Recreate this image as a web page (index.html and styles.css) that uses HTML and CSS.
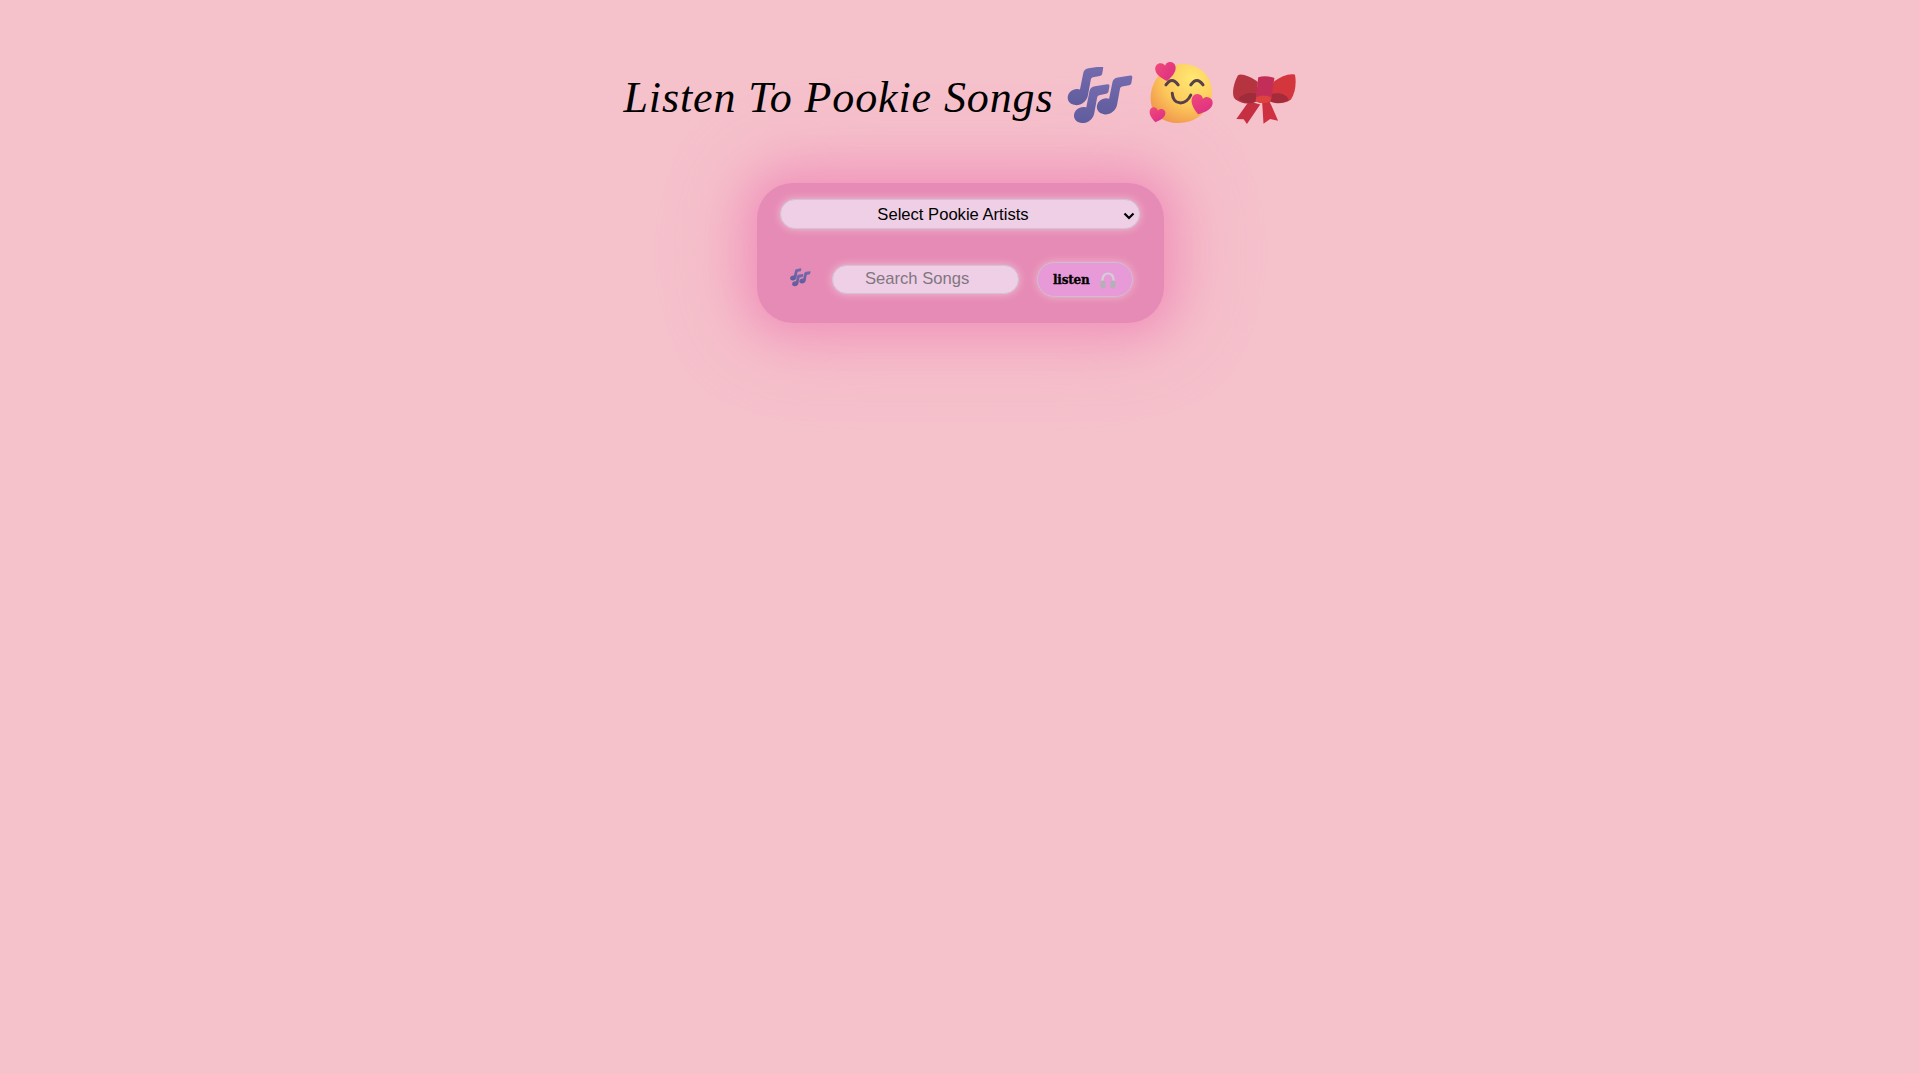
FILE: index.html
```html
<!DOCTYPE html>
<html lang="en">
<head>
<meta charset="utf-8">
<title>Listen To Pookie Songs</title>
<link rel="stylesheet" href="styles.css">
</head>
<body>
<svg class="defs" width="0" height="0" aria-hidden="true">
  <defs>
    <linearGradient id="noteGrad" x1="0" y1="0" x2="0" y2="1">
      <stop offset="0" stop-color="#756bae"/>
      <stop offset="1" stop-color="#5f5c9e"/>
    </linearGradient>
    <radialGradient id="faceGrad" cx="0.68" cy="0.25" r="0.85">
      <stop offset="0" stop-color="#ffe873"/>
      <stop offset="0.55" stop-color="#fdc95a"/>
      <stop offset="0.95" stop-color="#f19a4e"/>
    </radialGradient>
    <linearGradient id="heartGrad" x1="0" y1="0" x2="1" y2="1">
      <stop offset="0" stop-color="#f24a78"/>
      <stop offset="1" stop-color="#d92a86"/>
    </linearGradient>
    <g id="noteShape">
      <path d="M-26 3C-26 -14 -9 -26 7 -23Q9 -23 11 -22L21 -72Q24 -84 37 -86L75 -92Q82 -93 81 -86L78 -69Q77 -64 71 -63L50 -59Q45 -58 44 -53L35 -4C31 15 14 26 -2 25C-16 24 -26 15 -26 3Z"/>
    </g>
    <g id="notes" fill="url(#noteGrad)">
      <use href="#noteShape" x="108" y="138"/>
      <use href="#noteShape" x="127" y="192"/>
      <use href="#noteShape" x="196" y="166"/>
    </g>
    <path id="heart" d="M0 28C-14 18 -30 6 -30 -10C-30 -22 -20 -28 -11 -26C-6 -25 -2 -22 0 -17C2 -22 6 -25 11 -26C20 -28 30 -22 30 -10C30 6 14 18 0 28Z" fill="url(#heartGrad)"/>
  </defs>
</svg>

<header class="hero">
  <h1 class="title">Listen To Pookie Songs</h1>
  <svg class="emoji emoji-notes" viewBox="81 48 200 172"><use href="#notes"/></svg>
  <svg class="emoji emoji-face" viewBox="321 33 200 190">
    <path d="M425 42C475 40 515 75 516 125C517 175 475 220 415 220C365 220 330 190 331 145C332 90 372 44 425 42Z" fill="url(#faceGrad)"/>
    <g class="face-lines">
      <path d="M377 105Q395 78 414 105"/>
      <path d="M452 105Q470 78 489 105"/>
      <path d="M396 130C398 168 436 168 452 136"/>
    </g>
    <use href="#heart" transform="translate(377 65) rotate(-8) scale(1.03)"/>
    <use href="#heart" transform="translate(483 165) rotate(18) scale(1.08)"/>
    <use href="#heart" transform="translate(350 196) rotate(12) scale(0.8)"/>
  </svg>
  <svg class="emoji emoji-bow" viewBox="575 62 200 160">
    <path d="M628 150L590 204L612 205L622 219L662 160Z" fill="#c62f42"/>
    <path d="M668 155L672 218L692 204L716 209L690 150Z" fill="#cf3040"/>
    <path d="M655 92C630 75 605 65 595 72C582 95 576 125 583 140C600 160 635 162 650 150Z" fill="#b5343f"/>
    <path d="M596 143C610 125 635 122 652 128L650 150C635 160 612 156 596 143Z" fill="#a02b3b"/>
    <path d="M702 92C725 75 750 65 767 70C772 95 768 125 755 145C735 160 705 158 690 150Z" fill="#d4363d"/>
    <path d="M748 148C745 130 720 122 698 128L692 150C710 158 732 157 748 148Z" fill="#a42b3a"/>
    <path d="M656 78C670 73 690 74 705 80L694 150Q672 162 648 150Z" fill="#c22e58"/>
    <path d="M650 138Q672 128 696 138L693 150Q672 162 648 150Z" fill="#dd423f"/>
  </svg>
</header>

<main class="panel">
  <select class="artists">
    <option>Select Pookie Artists</option>
  </select>
  <form class="search">
    <svg class="search-icon" viewBox="81 48 200 172"><use href="#notes"/></svg>
    <input class="search-input" type="text" placeholder="Search Songs">
    <button class="listen" type="button">
      <span class="listen-label">listen</span>
      <svg class="phones" viewBox="0 0 16 18">
        <path d="M2.5 11V8a5.5 5.5 0 0 1 11 0v3" fill="none" stroke="#d2d0d4" stroke-width="2.2"/>
        <rect x="0.5" y="9.5" width="5" height="8" rx="2.2" fill="#b4b1b6"/>
        <rect x="10.5" y="9.5" width="5" height="8" rx="2.2" fill="#b4b1b6"/>
      </svg>
    </button>
  </form>
</main>
</body>
</html>
```
FILE: styles.css
```css
* {
  box-sizing: border-box;
}

body {
  margin: 0;
  padding-left: 2px;
  min-height: 1074px;
  background: #f5c2cb;
  overflow: hidden;
}

.defs {
  position: absolute;
}

.hero {
  display: flex;
  justify-content: center;
  align-items: center;
  gap: 13px;
  height: 183px;
  padding-bottom: 29px;
  padding-top: 30px;
}

.title {
  margin: 10px 0 0;
  font-family: "Liberation Serif", serif;
  font-style: italic;
  font-weight: 400;
  font-size: 44px;
  letter-spacing: 0.9px;
  color: #000;
  white-space: nowrap;
}

.emoji {
  display: block;
  flex: none;
}

.emoji-notes {
  width: 67px;
  height: 57px;
  margin-top: 7px;
}

.emoji-face {
  width: 67px;
  height: 63px;
}

.emoji-bow {
  width: 67px;
  height: 53px;
  margin: 12px 0 0 4px;
}

.face-lines path {
  fill: none;
  stroke: #57404a;
  stroke-width: 9;
  stroke-linecap: round;
}

.panel {
  width: 407px;
  height: 140px;
  margin: 0 auto;
  padding: 16px 24px 26px 23px;
  border-radius: 36px;
  background: #e68bb5;
  box-shadow: 0 0 36px 8px #f096bb, 0 0 70px 22px #f3a9c3, 0 0 110px 36px #f5bdcb;
}

.artists {
  display: block;
  width: 360px;
  height: 30px;
  padding: 0 14px 0 0;
  appearance: none;
  border: 1px solid #cfc4d0;
  border-radius: 15px;
  background-color: #eecfe6;
  background-image: url("data:image/svg+xml,%3Csvg xmlns='http://www.w3.org/2000/svg' viewBox='0 0 12 8'%3E%3Cpath d='M1.5 1.5L6 6l4.5-4.5' fill='none' stroke='%23000' stroke-width='2.2'/%3E%3C/svg%3E");
  background-repeat: no-repeat;
  background-position: right 4px top 12px;
  background-size: 12px 8px;
  box-shadow: 0 0 8px rgba(255, 255, 255, 0.45);
  font-family: "Liberation Sans", sans-serif;
  font-size: 16.6px;
  color: #000;
  text-align: center;
}

.search {
  display: flex;
  align-items: center;
  height: 35px;
  margin: 33px 0 0;
  padding-left: 10px;
}

.search-icon {
  flex: none;
  width: 21px;
  height: 19px;
  margin: -4px 21px 0 0;
}

.search-input {
  flex: none;
  width: 187px;
  height: 29px;
  margin-right: 18px;
  padding: 0 10px 2px 32px;
  border: 1px solid #cfc4d0;
  border-radius: 15px;
  background: #eecfe6;
  box-shadow: 0 0 8px rgba(255, 255, 255, 0.45);
  font-family: "Liberation Sans", sans-serif;
  font-size: 16.6px;
  color: #000;
}

.search-input::placeholder {
  color: #80767f;
  opacity: 1;
}

.listen {
  flex: none;
  display: flex;
  align-items: center;
  justify-content: space-between;
  width: 96px;
  height: 35px;
  padding: 0 16px 0 15px;
  border: 1px solid #cdbfce;
  border-radius: 18px;
  background: #e899d8;
  box-shadow: 0 0 8px rgba(255, 255, 255, 0.4);
}

.listen-label {
  font-family: "DejaVu Serif", serif;
  font-weight: 700;
  font-size: 12px;
  letter-spacing: -0.2px;
  color: #000;
  -webkit-text-stroke: 0.3px #000;
}

.phones {
  display: block;
  width: 16px;
  height: 18px;
}
```
